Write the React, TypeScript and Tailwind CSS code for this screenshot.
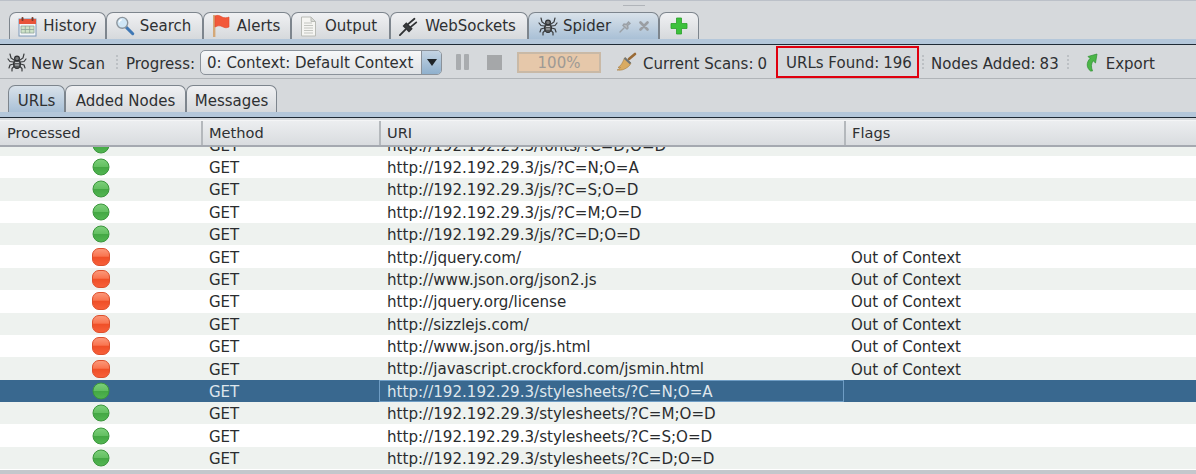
import { useId, type ReactNode } from "react";

const Spider = () => (
  <svg width="20" height="20" viewBox="0 0 20 20" fill="none" stroke="#3a3c3e" strokeWidth="1.200" strokeLinecap="round">
    <path d="M7 8 4 6 3 2M13 8l3-2 1-4M6.500 10 3 9.500 1 7M13.500 10l3.500-.5L19 7M6.500 12 3 13l-1 3M13.500 12l3.500 1 1 3M7.500 14 5 16.500 5 19M12.500 14l2.500 2.500V19" />
    <ellipse cx="10" cy="12" rx="3.400" ry="4.500" fill="#55585a" stroke="#2f3133" />
    <circle cx="10" cy="6.500" r="2.400" fill="#77797b" stroke="#2f3133" />
    <path d="M8.500 10.500h3M8.500 13h3" stroke="#c9cccf" strokeWidth="1" />
  </svg>
);

const CalendarIcon = () => (
  <svg width="19" height="21" viewBox="0 0 19 21">
    <rect x="1" y="3" width="17" height="17" fill="#f4f6f8" stroke="#7d98b8" />
    <rect x="1" y="3" width="17" height="5" fill="#e8543a" />
    <rect x="3.500" y="1" width="2" height="4" rx="1" fill="#7a3a2a" />
    <rect x="13.500" y="1" width="2" height="4" rx="1" fill="#7a3a2a" />
    <path d="M3 10h13v7H3zM3 13.500h13M7.300 10v7M11.700 10v7" fill="#cfe3c8" stroke="#8fa69a" strokeWidth="0.800" />
  </svg>
);

const SearchIcon = () => (
  <svg width="20" height="20" viewBox="0 0 22 22">
    <path d="m12.500 12.500 7 7" stroke="#3f78b5" strokeWidth="3.400" strokeLinecap="round" />
    <circle cx="8" cy="7.500" r="6" fill="#cfe6f6" stroke="#8c959c" strokeWidth="1.500" />
    <path d="M4.500 7a4 4 0 0 1 3-3" stroke="#fff" strokeWidth="1.500" fill="none" />
  </svg>
);

const FlagIcon = () => (
  <svg width="20" height="24" viewBox="0 0 20 24">
    <rect x="1" y="1" width="2.400" height="22" fill="#d4a878" />
    <path d="M3 2c3-1.500 5 0 7 1s5 1 7 0v10c-3 1.500-5 .5-7-.5s-4-1-7 .5z" fill="#f2583a" stroke="#e04a2c" strokeWidth="0.600" />
  </svg>
);

const PageIcon = () => (
  <svg width="17" height="21" viewBox="0 0 17 21">
    <path d="M1.500 1h9.500l4.500 4.500v14.500h-14z" fill="#f5f5f2" stroke="#b9bbb6" />
    <path d="M11 1v4.500h4.500z" fill="#d9dbd6" stroke="#b9bbb6" />
    <path d="M4 7h8M4 9.500h9M4 12h9M4 14.500h9M4 17h9" stroke="#c3c5c0" />
  </svg>
);

const PlugIcon = () => (
  <svg width="20" height="20" viewBox="0 0 22 22" fill="none" stroke="#2f3133" strokeLinecap="round">
    <path d="m1 21 6-6" strokeWidth="2" />
    <path d="m5 11 6 6 3-3-6-6z" fill="#3a3c3e" strokeWidth="1.500" />
    <path d="m10 9 7-6M13 12l6-5" strokeWidth="2" />
  </svg>
);

const PinIcon = () => (
  <svg width="13" height="13" viewBox="0 0 13 13" fill="none" stroke="#9aa0a6" strokeWidth="1.400" strokeLinecap="round">
    <path d="m1 12 4-4" />
    <path d="M4 5.500 8 9l1-1-.5-2.500L11 3.500 9.500 2 7.500 4.500 5 4z" fill="#b9bdc1" />
  </svg>
);

const CloseIcon = () => (
  <svg width="10" height="10" viewBox="0 0 10 10" stroke="#9a9ea3" strokeWidth="2.600" strokeLinecap="round">
    <path d="m1.500 1.500 7 7M8.500 1.500l-7 7" />
  </svg>
);

const PlusIcon = () => (
  <svg width="18" height="18" viewBox="0 0 18 18">
    <path d="M6.500 1h5v5.500H17v5h-5.500V17h-5v-5.500H1v-5h5.500z" fill="#3cc13c" stroke="#2aa02a" strokeWidth="0.800" />
  </svg>
);

const BroomIcon = () => (
  <svg width="22" height="20" viewBox="0 0 22 20">
    <path d="m13 7 6-5" stroke="#9a6a35" strokeWidth="2.600" strokeLinecap="round" />
    <path d="M9 5.500 15 11c-1 3-4 5-7.500 6.500-1.500.6-4 .8-6.500.5 2-.8 3-1.500 3.500-2.500-.8.3-1.500.3-2.500 0 3-1.500 4.500-5 6.500-9.500z" fill="#d9ab62" stroke="#a87c3c" strokeWidth="0.600" />
    <path d="M8.500 6 14.500 11.500" stroke="#6d7478" strokeWidth="2" />
  </svg>
);

const ExportIcon = () => (
  <svg width="15" height="19" viewBox="0 0 15 19">
    <path d="M7.500 18C3.500 15 3 9.500 7 5.500L5 3.500 14 1l-1.500 9-2.300-2.200C8 10.500 8 14 9.500 18z" fill="#4cb648" stroke="#2e8f32" strokeWidth="0.700" />
  </svg>
);

const Ball = ({ color }: { color: "green" | "red" }) => {
  const id = useId();
  if (color === "green") {
    return (
      <svg width="18" height="18" viewBox="0 0 18 18">
        <defs>
          <linearGradient id={id} x1="0" y1="0" x2="0" y2="1">
            <stop offset="0" stopColor="#7ed07c" />
            <stop offset="0.5" stopColor="#62bf60" />
            <stop offset="0.52" stopColor="#44a844" />
            <stop offset="1" stopColor="#52b652" />
          </linearGradient>
        </defs>
        <circle cx="9" cy="9" r="8" fill={`url(#${id})`} stroke="#3b963c" />
      </svg>
    );
  }
  return (
    <svg width="18" height="18" viewBox="0 0 18 18">
      <defs>
        <linearGradient id={id} x1="0" y1="0" x2="0" y2="1">
          <stop offset="0" stopColor="#fb9a7c" />
          <stop offset="0.46" stopColor="#f9744f" />
          <stop offset="0.5" stopColor="#ef4f27" />
          <stop offset="1" stopColor="#f7603a" />
        </linearGradient>
      </defs>
      <rect x="0.500" y="0.500" width="17" height="17" rx="6.500" fill={`url(#${id})`} stroke="#dc4f2c" />
    </svg>
  );
};

const Tab = ({
  width,
  active,
  children,
}: {
  width: string;
  active?: boolean;
  children: ReactNode;
}) => (
  <div
    className={`${width} flex h-full items-center justify-center gap-1.5 rounded-t-[7px] border border-b-0 border-[#7d858d] text-[#2e3032] ${
      active
        ? "bg-linear-to-b from-[#d9e2ea] to-[#a9c0d6]"
        : "bg-linear-to-b from-[#f0f1f3] to-[#d6d9dc]"
    }`}
  >
    {children}
  </div>
);

const Grip = () => (
  <div className="h-[14px] w-0 border-l-2 border-dotted border-[#bcc0c4]" />
);

type Row = {
  uri: string;
  ok: boolean;
  selected?: boolean;
};

const rows: Row[] = [
  { uri: "http://192.192.29.3/fonts/?C=D;O=D", ok: true },
  { uri: "http://192.192.29.3/js/?C=N;O=A", ok: true },
  { uri: "http://192.192.29.3/js/?C=S;O=D", ok: true },
  { uri: "http://192.192.29.3/js/?C=M;O=D", ok: true },
  { uri: "http://192.192.29.3/js/?C=D;O=D", ok: true },
  { uri: "http://jquery.com/", ok: false },
  { uri: "http://www.json.org/json2.js", ok: false },
  { uri: "http://jquery.org/license", ok: false },
  { uri: "http://sizzlejs.com/", ok: false },
  { uri: "http://www.json.org/js.html", ok: false },
  { uri: "http://javascript.crockford.com/jsmin.html", ok: false },
  { uri: "http://192.192.29.3/stylesheets/?C=N;O=A", ok: true, selected: true },
  { uri: "http://192.192.29.3/stylesheets/?C=M;O=D", ok: true },
  { uri: "http://192.192.29.3/stylesheets/?C=S;O=D", ok: true },
  { uri: "http://192.192.29.3/stylesheets/?C=D;O=D", ok: true },
];

const columns = "grid grid-cols-[201px_178px_465px_1fr]";

export default function App() {
  return (
    <div className="flex h-[474px] w-[1196px] flex-col overflow-hidden bg-[#d6d9dc] font-['DejaVu_Sans',sans-serif] text-[15px] leading-none">
      {/* top strip */}
      <div className="h-[12px] shrink-0 border-t border-[#bcc1c9] pl-[623px] pt-1">
        <div className="h-px w-[22px] bg-[#b0b4b9]" />
      </div>

      {/* main tabs */}
      <div className="flex h-[27px] shrink-0 pl-[9px]">
        <Tab width="w-[97px]">
          <CalendarIcon />
          <span className="pt-px">History</span>
        </Tab>
        <Tab width="w-[97px]">
          <SearchIcon />
          <span className="-ml-px pr-[3px] pt-px">Search</span>
        </Tab>
        <Tab width="w-[88px]">
          <FlagIcon />
          <span className="-ml-px pr-[2px] pt-px">Alerts</span>
        </Tab>
        <Tab width="w-[99px]">
          <PageIcon />
          <span className="ml-0.5 pr-[4px] pt-px">Output</span>
        </Tab>
        <Tab width="w-[138px]">
          <PlugIcon />
          <span className="pr-[3px] pt-px">WebSockets</span>
        </Tab>
        <Tab width="w-[131px]" active>
          <Spider />
          <span className="-ml-px pt-px">Spider</span>
          <div className="ml-0.5">
            <PinIcon />
          </div>
          <div className="ml-px">
            <CloseIcon />
          </div>
        </Tab>
        <Tab width="w-[40px]">
          <PlusIcon />
        </Tab>
      </div>
      <div className="h-[6px] shrink-0 border-b border-[#1f2a35] bg-[#b4c7da]" />

      {/* toolbar */}
      <div className="flex h-[34px] shrink-0 items-center border-b border-[#b0b4b8] pl-[7px] pt-px text-[#2e3032]">
        <Spider />
        <span className="ml-1 pt-[5px]">New Scan</span>
        <div className="ml-[11px]">
          <Grip />
        </div>
        <span className="ml-2 pt-[5px]">Progress:</span>
        <div className="ml-[5px] flex h-[25px] w-[242px] overflow-hidden rounded-[5px] border border-[#8b929a] bg-linear-to-b from-[#f7f8f9] to-[#dfe2e5]">
          <span className="flex flex-1 items-center pl-1.5 pt-[3px]">
            0: Context: Default Context
          </span>
          <div className="flex w-[20px] items-center justify-center border-l border-[#8b929a] bg-linear-to-b from-[#c4d4e3] to-[#8fb0cd]">
            <div className="size-0 border-x-[5px] border-t-[7px] border-x-transparent border-t-[#1f2428]" />
          </div>
        </div>
        <div className="ml-[14px] flex gap-[3px]">
          <div className="h-[16px] w-[5px] rounded-[1px] bg-[#a9acaf]" />
          <div className="h-[16px] w-[5px] rounded-[1px] bg-[#a9acaf]" />
        </div>
        <div className="ml-[18px] size-[15px] bg-[#a5a7a9]" />
        <div className="ml-[15px] flex h-[21px] w-[84px] items-center justify-center border-2 border-[#c9b9a6] bg-[#e6c8aa] pt-[3px] text-[#9e9a95]">
          100%
        </div>
        <div className="ml-[15px]">
          <BroomIcon />
        </div>
        <span className="ml-[5px] pt-[5px]">Current Scans:</span>
        <span className="ml-[4px] pt-[5px]">0</span>
        <div className="ml-[9px] flex h-[32px] w-[143px] items-center border-2 border-[#e0000f] pl-[8px]">
          <span className="pt-[3px]">URLs Found:</span>
          <span className="ml-[4px] pt-[3px]">196</span>
        </div>
        <div className="ml-[3px]">
          <Grip />
        </div>
        <span className="ml-[7px] pt-[5px]">Nodes Added:</span>
        <span className="ml-[4px] pt-[5px]">83</span>
        <div className="ml-[8px]">
          <Grip />
        </div>
        <div className="ml-[14px]">
          <ExportIcon />
        </div>
        <span className="ml-[8px] pt-[5px]">Export</span>
      </div>

      {/* sub tabs */}
      <div className="mt-[6px] flex h-[27px] shrink-0 pl-[8px]">
        <Tab width="w-[57px]" active>
          <span className="pt-[5px]">URLs</span>
        </Tab>
        <Tab width="w-[121px]">
          <span className="pt-[5px]">Added Nodes</span>
        </Tab>
        <Tab width="w-[91px]">
          <span className="pt-[5px]">Messages</span>
        </Tab>
      </div>
      <div className="h-[6px] shrink-0 border-b border-[#1f2a35] bg-[#b4c7da]" />

      {/* table */}
      <div
        className={`${columns} mt-[2px] h-[27px] shrink-0 border-y border-b-2 border-t-[#f4f5f6] border-b-[#a5a9b0] bg-linear-to-b from-[#eceef0] to-[#d9dcdf] text-[14.6px] text-[#2e3032]`}
      >
        <div className="flex items-center pl-[7px]">Processed</div>
        <div className="flex items-center border-l-2 border-[#b4b8bc] pl-[6px]">Method</div>
        <div className="flex items-center border-l-2 border-[#b4b8bc] pl-[6px]">URI</div>
        <div className="flex items-center border-l-2 border-[#b4b8bc] pl-[6px]">Flags</div>
      </div>
      <div className="h-[323px] shrink-0 overflow-hidden bg-white">
        <div className="-mt-[13.6px]">
          {rows.map((row, i) => (
            <div
              key={row.uri}
              className={`${columns} h-[22.4px] items-center ${
                row.selected
                  ? "bg-[#39688f] text-[#dfe6ec]"
                  : i % 2 === 0
                    ? "bg-[#eef2ef] text-[#2a2c2e]"
                    : "bg-white text-[#2a2c2e]"
              }`}
            >
              <div className="flex justify-center">
                <Ball color={row.ok ? "green" : "red"} />
              </div>
              <div className="pl-2 pt-[3px]">GET</div>
              <div
                className={`flex h-full items-center pl-2 pt-[3px] text-[15.1px] ${
                  row.selected ? "border border-[#6f9dc4] pl-[7px]" : ""
                }`}
              >
                {row.uri}
              </div>
              <div className="pl-[7px] pt-[3px]">{row.ok ? "" : "Out of Context"}</div>
            </div>
          ))}
        </div>
      </div>
      <div className="flex-1 bg-[#c4c7cc]" />
    </div>
  );
}
